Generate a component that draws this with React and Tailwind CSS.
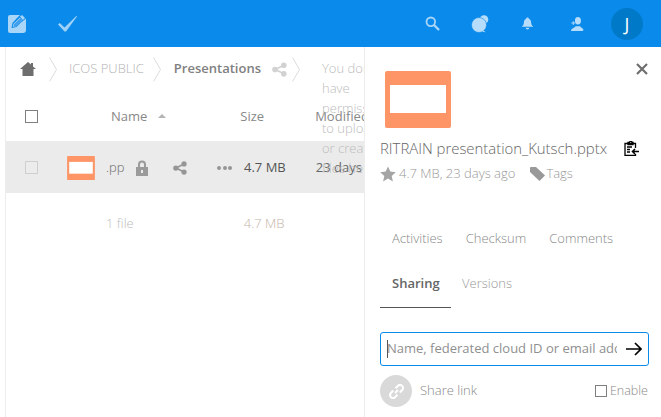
import React from "react";

const ShareIcon = ({ className, color = "#969696" }) => (
  <svg viewBox="0 0 16 16" className={className} fill={color}>
    <circle cx="12.6" cy="3.4" r="3" />
    <circle cx="12.6" cy="12.6" r="3" />
    <circle cx="3.2" cy="8" r="3" />
    <path d="M3 7.2 12.2 2.6l.8 1.6L3.8 8.8zM3.8 7.2l9.2 4.6-.8 1.6L3 8.8z" />
  </svg>
);

const Chevron = ({ className }) => (
  <svg viewBox="0 0 8 25" className={className} fill="none" stroke="#dcdcdc" strokeWidth="1">
    <path d="M.5.5 7.5 12.5.5 24.5" />
  </svg>
);

const PptIcon = ({ className }) => (
  <svg viewBox="0 0 66 57" className={className}>
    <rect x="0" y="0" width="66" height="57" rx="2" fill="#fd9567" />
    <rect x="5" y="14" width="56" height="28" fill="#fff" />
  </svg>
);

function TopBar() {
  return (
    <header className="flex items-center h-[47px] bg-[#0a8aea] shrink-0">
      <svg viewBox="0 0 18 18" className="w-[18px] h-[18px] ml-[8px] shrink-0">
        <path d="M2 0h10L9 3 4.500 8 3.500 13l5-1L13 7.500l5-4V15a3 3 0 0 1-3 3H2a2 2 0 0 1-2-2V2a2 2 0 0 1 2-2z" fill="#a9d6f8" />
        <path d="M5.300 9 12 2.500l2.500 2.500L8 11.500l-3.200.6z" fill="#a9d6f8" />
        <path d="M5.300 12.400 6 9.300l6.500-6.300 1.800 2-6.300 6.500z" fill="#3f9fee" />
        <path d="M12 1.500 14 0l3 3-2 2z" fill="#a9d6f8" />
      </svg>
      <svg viewBox="0 0 19 16" className="w-[19px] h-[16px] ml-[32px] shrink-0" fill="#9fd0f7">
        <path d="M0 8.500 1.800 7 6.500 11.500 18.300 0 19 .6 8 15.500H6.500z" />
      </svg>
      <div className="flex-1" />
      <svg viewBox="0 0 15 15" className="w-[15px] h-[15px]" fill="none" stroke="#a9d6f8">
        <circle cx="5.800" cy="5.800" r="4.300" strokeWidth="1.800" />
        <path d="m9 9 5 5" strokeWidth="2.400" />
      </svg>
      <svg viewBox="0 0 18 18" className="w-[18px] h-[18px] ml-[31px]" fill="#b5dcfa">
        <circle cx="13" cy="4.500" r="4.300" />
        <circle cx="8" cy="10" r="7.500" stroke="#0a8aea" strokeWidth="0.600" />
        <path d="M12 15.500l3 1.800-3.500-.5z" />
      </svg>
      <svg viewBox="0 0 12 13" className="w-[11px] h-[13px] ml-[33px]" fill="#b5dcfa">
        <path d="M6 0c1 0 1.500.7 1.500 1.300C9.500 2 10 4 10 6c0 1.500 1 3 2 3.500V10H0v-.5C1 9 2 7.500 2 6c0-2 .5-4 2.500-4.700C4.500.7 5 0 6 0z" />
        <path d="M4 11h4a2 2 0 0 1-4 0z" />
      </svg>
      <svg viewBox="0 0 14 15" className="w-[14px] h-[14px] ml-[37px]" fill="#b5dcfa">
        <ellipse cx="8" cy="4" rx="3.200" ry="4" />
        <path d="M2 15c-1.500 0-2-1-.8-2 2-1.300 3.800-2 4.300-3h5c.5 1 1.500 1.600 2.800 2.500 1 .8.700 2.500-.8 2.500z" />
        <path d="M1 6h1.500V4.500h1V6H5v1H3.500v1.500h-1V7H1z" />
      </svg>
      <div className="w-8 h-8 rounded-full bg-[#0079c9] ml-[27px] mr-[18px] flex items-center justify-center text-white text-[18px] font-normal leading-none">
        J
      </div>
    </header>
  );
}

function FileArea() {
  return (
    <main className="relative w-[359px] shrink-0 overflow-hidden border-l border-[#ededed] ml-[5px] text-[13px] font-light text-[#555]">
      <nav className="flex items-center h-[44px]">
        <svg viewBox="0 0 16 14" className="w-[16px] h-[14px] ml-[14px] shrink-0" fill="#6e6e6e">
          <path d="M8 0l3 2.600V1h2v3.400L16 7h-2.500v7h-11V7H0z" />
        </svg>
        <Chevron className="w-[8px] h-[25px] ml-[13px] shrink-0" />
        <span className="ml-[12px] text-[#b4b4b4] shrink-0">ICOS PUBLIC</span>
        <Chevron className="w-[8px] h-[25px] ml-[9px] shrink-0" />
        <span className="ml-[13px] text-[#808080] font-semibold shrink-0">Presentations</span>
        <ShareIcon className="w-[15px] h-[15px] ml-[11px] shrink-0" color="#d2d2d2" />
        <Chevron className="w-[8px] h-[25px] ml-[5px] shrink-0" />
      </nav>

      <div className="absolute z-10 left-[316px] top-[11px] w-[60px] text-[#bcbcbc] leading-[20px]">
        You don't have permission to upload or create files here
      </div>

      <div className="flex items-center h-[50px] pt-[1px] text-[#707070]">
        <span className="w-[13px] h-[13px] ml-[19px] border border-[#7f7f7f] bg-white shrink-0" />
        <span className="ml-[73px] font-normal text-[#888] shrink-0">Name</span>
        <span className="ml-[11px] mb-[1px] w-0 h-0 shrink-0 border-x-[4px] border-x-transparent border-b-[4px] border-b-[#b4b4b4]" />
        <span className="ml-[74px] font-normal text-[#888] shrink-0">Size</span>
        <span className="ml-[51px] font-normal text-[#888] shrink-0">Modified</span>
      </div>

      <div className="relative flex items-center h-[52px] pt-[1px] bg-[#ebebeb]">
        <span className="w-[13px] h-[13px] ml-[19px] border border-[#cfcfcf] bg-[#ececec] shrink-0" />
        <PptIcon className="w-[28px] h-[24px] ml-[29px] shrink-0" />
        <span className="w-[19px] ml-[11px] overflow-hidden whitespace-nowrap text-[#666] shrink-0">.pptx</span>
        <svg viewBox="0 0 14 16" className="w-[14px] h-[16px] ml-[10px] shrink-0" fill="#9b9b9b">
          <path fillRule="evenodd" d="M3 7V4.500a4 4 0 0 1 8 0V7h2v9H1V7zm2 0h4V4.500a2 2 0 0 0-4 0zm1 3v3h2v-3z" />
        </svg>
        <ShareIcon className="w-[14px] h-[14px] ml-[24px] shrink-0" color="#969696" />
        <span className="flex gap-[1.500px] ml-[30px] shrink-0">
          <i className="w-[4px] h-[4px] rounded-full bg-[#969696]" />
          <i className="w-[4px] h-[4px] rounded-full bg-[#969696]" />
          <i className="w-[4px] h-[4px] rounded-full bg-[#969696]" />
        </span>
        <span className="ml-[12px] font-normal text-[#555] whitespace-nowrap shrink-0">4.7 MB</span>
        <span className="ml-[30px] font-normal text-[#666] whitespace-nowrap shrink-0">23 days ago</span>
      </div>

      <div className="flex items-center h-[60px] pt-[1px] text-[#bdbdbd]">
        <span className="ml-[100px] shrink-0">1 file</span>
        <span className="ml-[110px] text-[#c4b4a8] shrink-0">4.7 MB</span>
      </div>
    </main>
  );
}

function Sidebar() {
  return (
    <aside className="flex-1 min-w-0 border-l border-[#ededed] relative text-[13px] font-light text-[#777]">
      <button className="absolute right-[12px] top-[15px] w-[13px] h-[13px]">
        <svg viewBox="0 0 12 12" className="w-[12px] h-[12px]" stroke="#6e6e6e" strokeWidth="2.200">
          <path d="m1 1 10 10M11 1 1 11" />
        </svg>
      </button>
      <PptIcon className="w-[66px] h-[57px] ml-[20px] mt-[24px]" />
      <div className="flex items-center ml-[15px] mt-[10px] h-[20px]">
        <span className="text-[14.900px] text-[#666] whitespace-nowrap">RITRAIN presentation_Kutsch.pptx</span>
        <svg viewBox="0 0 15 15" className="w-[15px] h-[15px] ml-[17px] shrink-0" fill="none" stroke="#000" strokeWidth="1.300">
          <path d="M11.500 7V2.500H1v12h10.500V13M4 2.500V1.500h1.500a1.200 1.200 0 0 1 2.500 0H9v2H4z" />
          <path d="M3 6h5M3 8.500h3M3 11h3" />
          <path d="M15 10.500H8.500M11 8l-2.500 2.500L11 13" strokeWidth="1.600" />
        </svg>
      </div>
      <div className="flex items-center ml-[15px] mt-[6px] h-[20px] text-[#999]">
        <svg viewBox="0 0 16 16" className="w-[16px] h-[16px] shrink-0" fill="#a5a5a5">
          <path d="m8 .5 2.300 5.100 5.500.6-4.100 3.700 1.200 5.500L8 12.600l-4.900 2.800 1.200-5.500L.2 6.200l5.500-.6z" />
        </svg>
        <span className="ml-[3px]">4.7 MB, 23 days ago</span>
        <svg viewBox="0 0 15 14" className="w-[15px] h-[14px] ml-[15px] shrink-0" fill="#999">
          <path d="M0 1a1 1 0 0 1 1-1h5l9 8.500-5.500 5.500L0 5z" />
        </svg>
        <span className="ml-[1px]">Tags</span>
      </div>

      <div className="flex ml-[27px] mt-[45px] h-[20px] items-center text-[#888]">
        <span>Activities</span>
        <span className="ml-[23px]">Checksum</span>
        <span className="ml-[23px]">Comments</span>
      </div>

      <div className="flex mt-[20px] ml-[15px] h-[39px]">
        <div className="w-[71px] pl-[12px] pt-[5px] border-b border-[#555] font-semibold text-[#666] h-[39px]">Sharing</div>
        <div className="ml-[11px] pt-[5px] text-[#999]">Versions</div>
      </div>

      <div className="flex items-center ml-[15px] mt-[24px] w-[269px] h-[34px] rounded-[3px] border border-[#0a8aea] bg-white pl-[6px] pr-[6px]">
        <span className="w-px h-[18px] bg-[#555] -mr-px shrink-0" />
        <span className="flex-1 min-w-0 overflow-hidden whitespace-nowrap font-normal text-[#8f8f8f]">
          Name, federated cloud ID or email address
        </span>
        <svg viewBox="0 0 16 14" className="w-[16px] h-[14px] ml-[9px] shrink-0" fill="none" stroke="#000" strokeWidth="1.700">
          <path d="M0 7h15M9 1l6 6-6 6" />
        </svg>
      </div>

      <div className="flex items-center ml-[15px] mt-[9px] w-[269px] h-[32px]">
        <span className="w-8 h-8 rounded-full bg-[#d9d9d9] flex items-center justify-center shrink-0">
          <svg viewBox="0 0 16 16" className="w-[15px] h-[15px]" fill="none" stroke="#fff" strokeWidth="2.200">
            <path d="M6.500 9.500 9.500 6.500M7 4.500 9.500 2a3 3 0 0 1 4.500 4.500L11.500 9M9 11.500 6.500 14A3 3 0 0 1 2 9.500L4.500 7" />
          </svg>
        </span>
        <span className="ml-[8px] text-[#888]">Share link</span>
        <span className="flex-1" />
        <span className="w-[12px] h-[12px] border border-[#7f7f7f] shrink-0" />
        <span className="ml-[3px] text-[#888] mr-[1px] text-[12.500px]">Enable</span>
      </div>
    </aside>
  );
}

export default function App() {
  return (
    <div className="w-[661px] h-[417px] overflow-hidden bg-white flex flex-col" style={{ fontFamily: '"Open Sans", sans-serif' }}>
      <TopBar />
      <div className="flex flex-1 min-h-0">
        <FileArea />
        <Sidebar />
      </div>
    </div>
  );
}
